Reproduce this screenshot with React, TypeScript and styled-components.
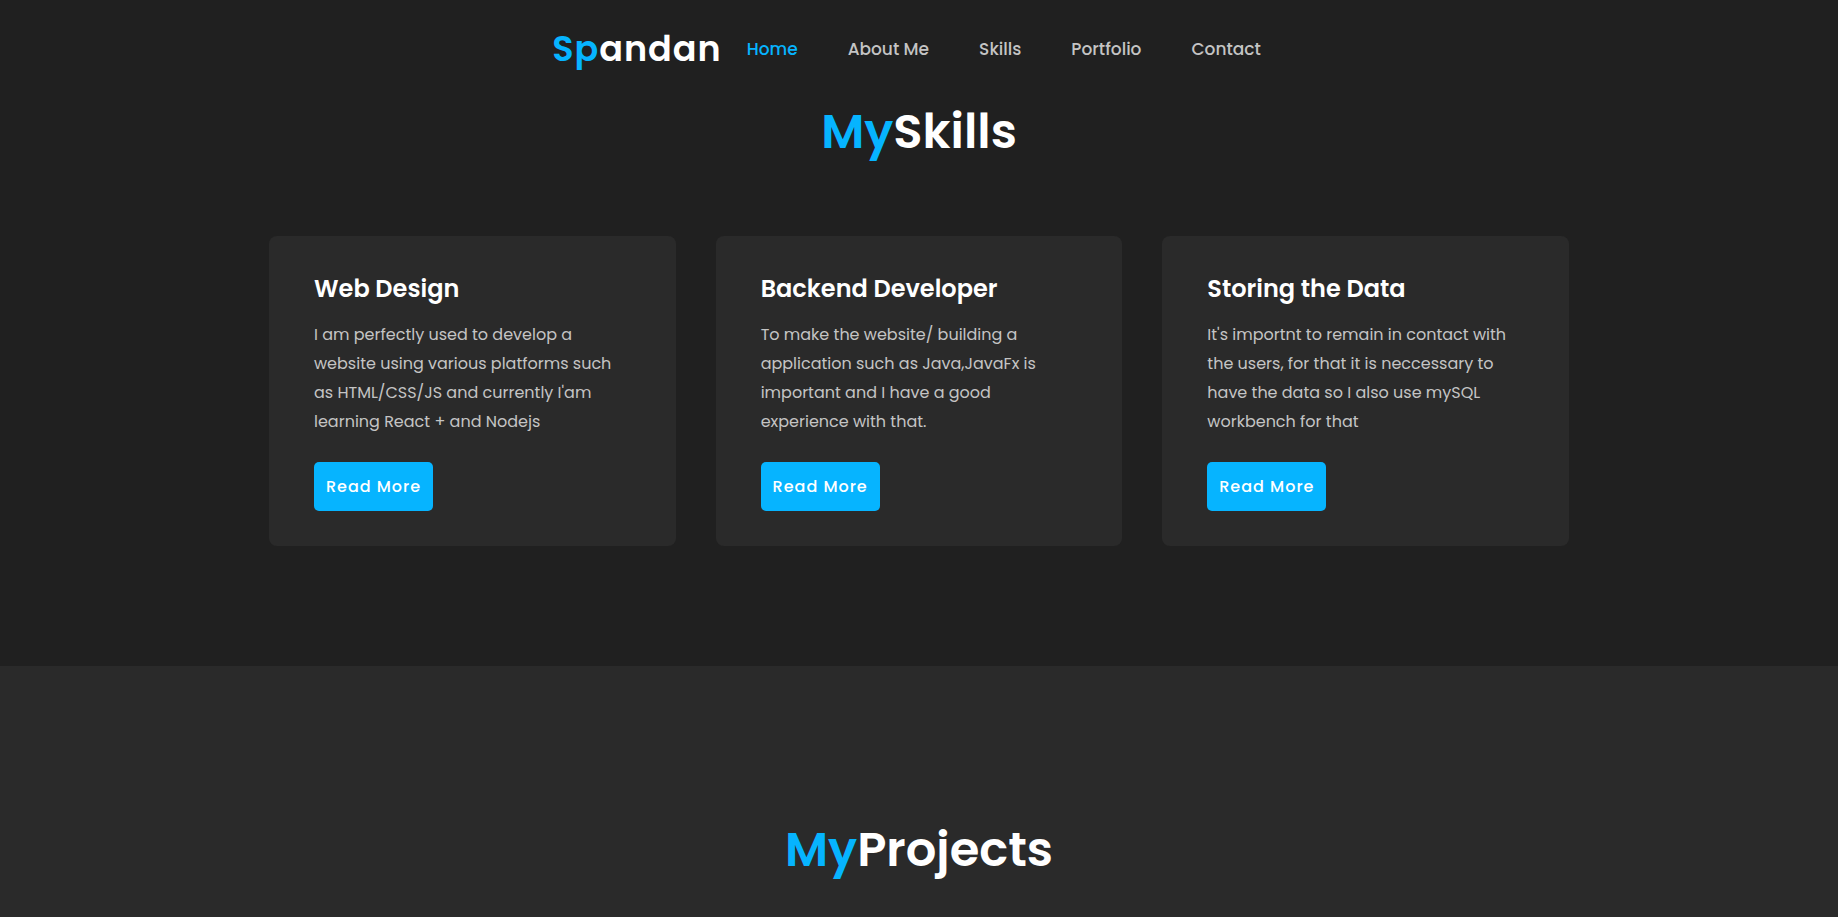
import React from "react";
import styled, { createGlobalStyle } from "styled-components";

const GlobalStyle = createGlobalStyle`
  *, *::before, *::after { box-sizing: border-box; }
  body {
    margin: 0;
    background: #202020;
    color: #fff;
    font-family: Poppins, Inter, "Liberation Sans", sans-serif;
  }
  h2, h3, p { margin: 0; }
`;

const Page = styled.div`
  display: flex;
  flex-direction: column;
  min-height: 100vh;
`;

const Header = styled.header`
  display: flex;
  flex-wrap: wrap;
  justify-content: center;
  align-items: center;
  min-height: 98px;
`;

const Accent = styled.span`
  color: #06b4ff;
`;

const Logo = styled.a`
  color: #fff;
  font-size: 35px;
  font-weight: 600;
  letter-spacing: 1px;
  line-height: 54px;
  text-decoration: none;
`;

const Nav = styled.nav`
  display: flex;
  flex-wrap: wrap;
`;

const NavLink = styled.a<{ $active?: boolean }>`
  padding: 0 25px;
  color: ${(p) => (p.$active ? "#06b4ff" : "#c4c4c4")};
  font-size: 17px;
  font-weight: 500;
  line-height: 26px;
  text-decoration: none;
`;

const SkillsSection = styled.section`
  padding: 0 20px 120px;
`;

const ProjectsSection = styled.section`
  flex: 1;
  padding: 150px 20px 20px;
  background: #2a2a2a;
`;

const SectionTitle = styled.h2`
  font-size: 48px;
  font-weight: 600;
  line-height: 68px;
  text-align: center;
`;

const Cards = styled.div`
  display: grid;
  grid-template-columns: repeat(auto-fit, minmax(300px, 1fr));
  gap: 40px;
  max-width: 1300px;
  margin: 70px auto 0;
`;

const Card = styled.article`
  padding: 35px 45px;
  border-radius: 8px;
  background: #2a2a2a;
`;

const CardTitle = styled.h3`
  margin-bottom: 13px;
  font-size: 24px;
  font-weight: 600;
  line-height: 36px;
`;

const CardText = styled.p`
  margin-bottom: 26px;
  color: #c4c4c4;
  font-size: 16px;
  line-height: 29px;
`;

const ReadMore = styled.button`
  min-width: 119px;
  height: 49px;
  padding: 0 10px;
  border: 0;
  border-radius: 5px;
  background: #06b4ff;
  color: #fff;
  font: inherit;
  font-size: 16px;
  font-weight: 500;
  letter-spacing: 1px;
  white-space: nowrap;
  cursor: pointer;
`;

const links = [
  { label: "Home", href: "#home" },
  { label: "About Me", href: "#about" },
  { label: "Skills", href: "#skills" },
  { label: "Portfolio", href: "#portfolio" },
  { label: "Contact", href: "#contact" },
];

const skills = [
  {
    title: "Web Design",
    text: "I am perfectly used to develop a website using various platforms such as HTML/CSS/JS and currently I'am learning React + and Nodejs",
  },
  {
    title: "Backend Developer",
    text: "To make the website/ building a application such as Java,JavaFx is important and I have a good experience with that.",
  },
  {
    title: "Storing the Data",
    text: "It's importnt to remain in contact with the users, for that it is neccessary to have the data so I also use mySQL workbench for that",
  },
];

export default function App() {
  return (
    <Page>
      <GlobalStyle />
      <Header>
        <Logo href="#home">
          <Accent>Sp</Accent>andan
        </Logo>
        <Nav>
          {links.map((link, i) => (
            <NavLink key={link.href} href={link.href} $active={i === 0}>
              {link.label}
            </NavLink>
          ))}
        </Nav>
      </Header>
      <SkillsSection id="skills">
        <SectionTitle>
          <Accent>My</Accent>Skills
        </SectionTitle>
        <Cards>
          {skills.map((skill) => (
            <Card key={skill.title}>
              <CardTitle>{skill.title}</CardTitle>
              <CardText>{skill.text}</CardText>
              <ReadMore type="button">Read More</ReadMore>
            </Card>
          ))}
        </Cards>
      </SkillsSection>
      <ProjectsSection id="portfolio">
        <SectionTitle>
          <Accent>My</Accent>Projects
        </SectionTitle>
      </ProjectsSection>
    </Page>
  );
}
